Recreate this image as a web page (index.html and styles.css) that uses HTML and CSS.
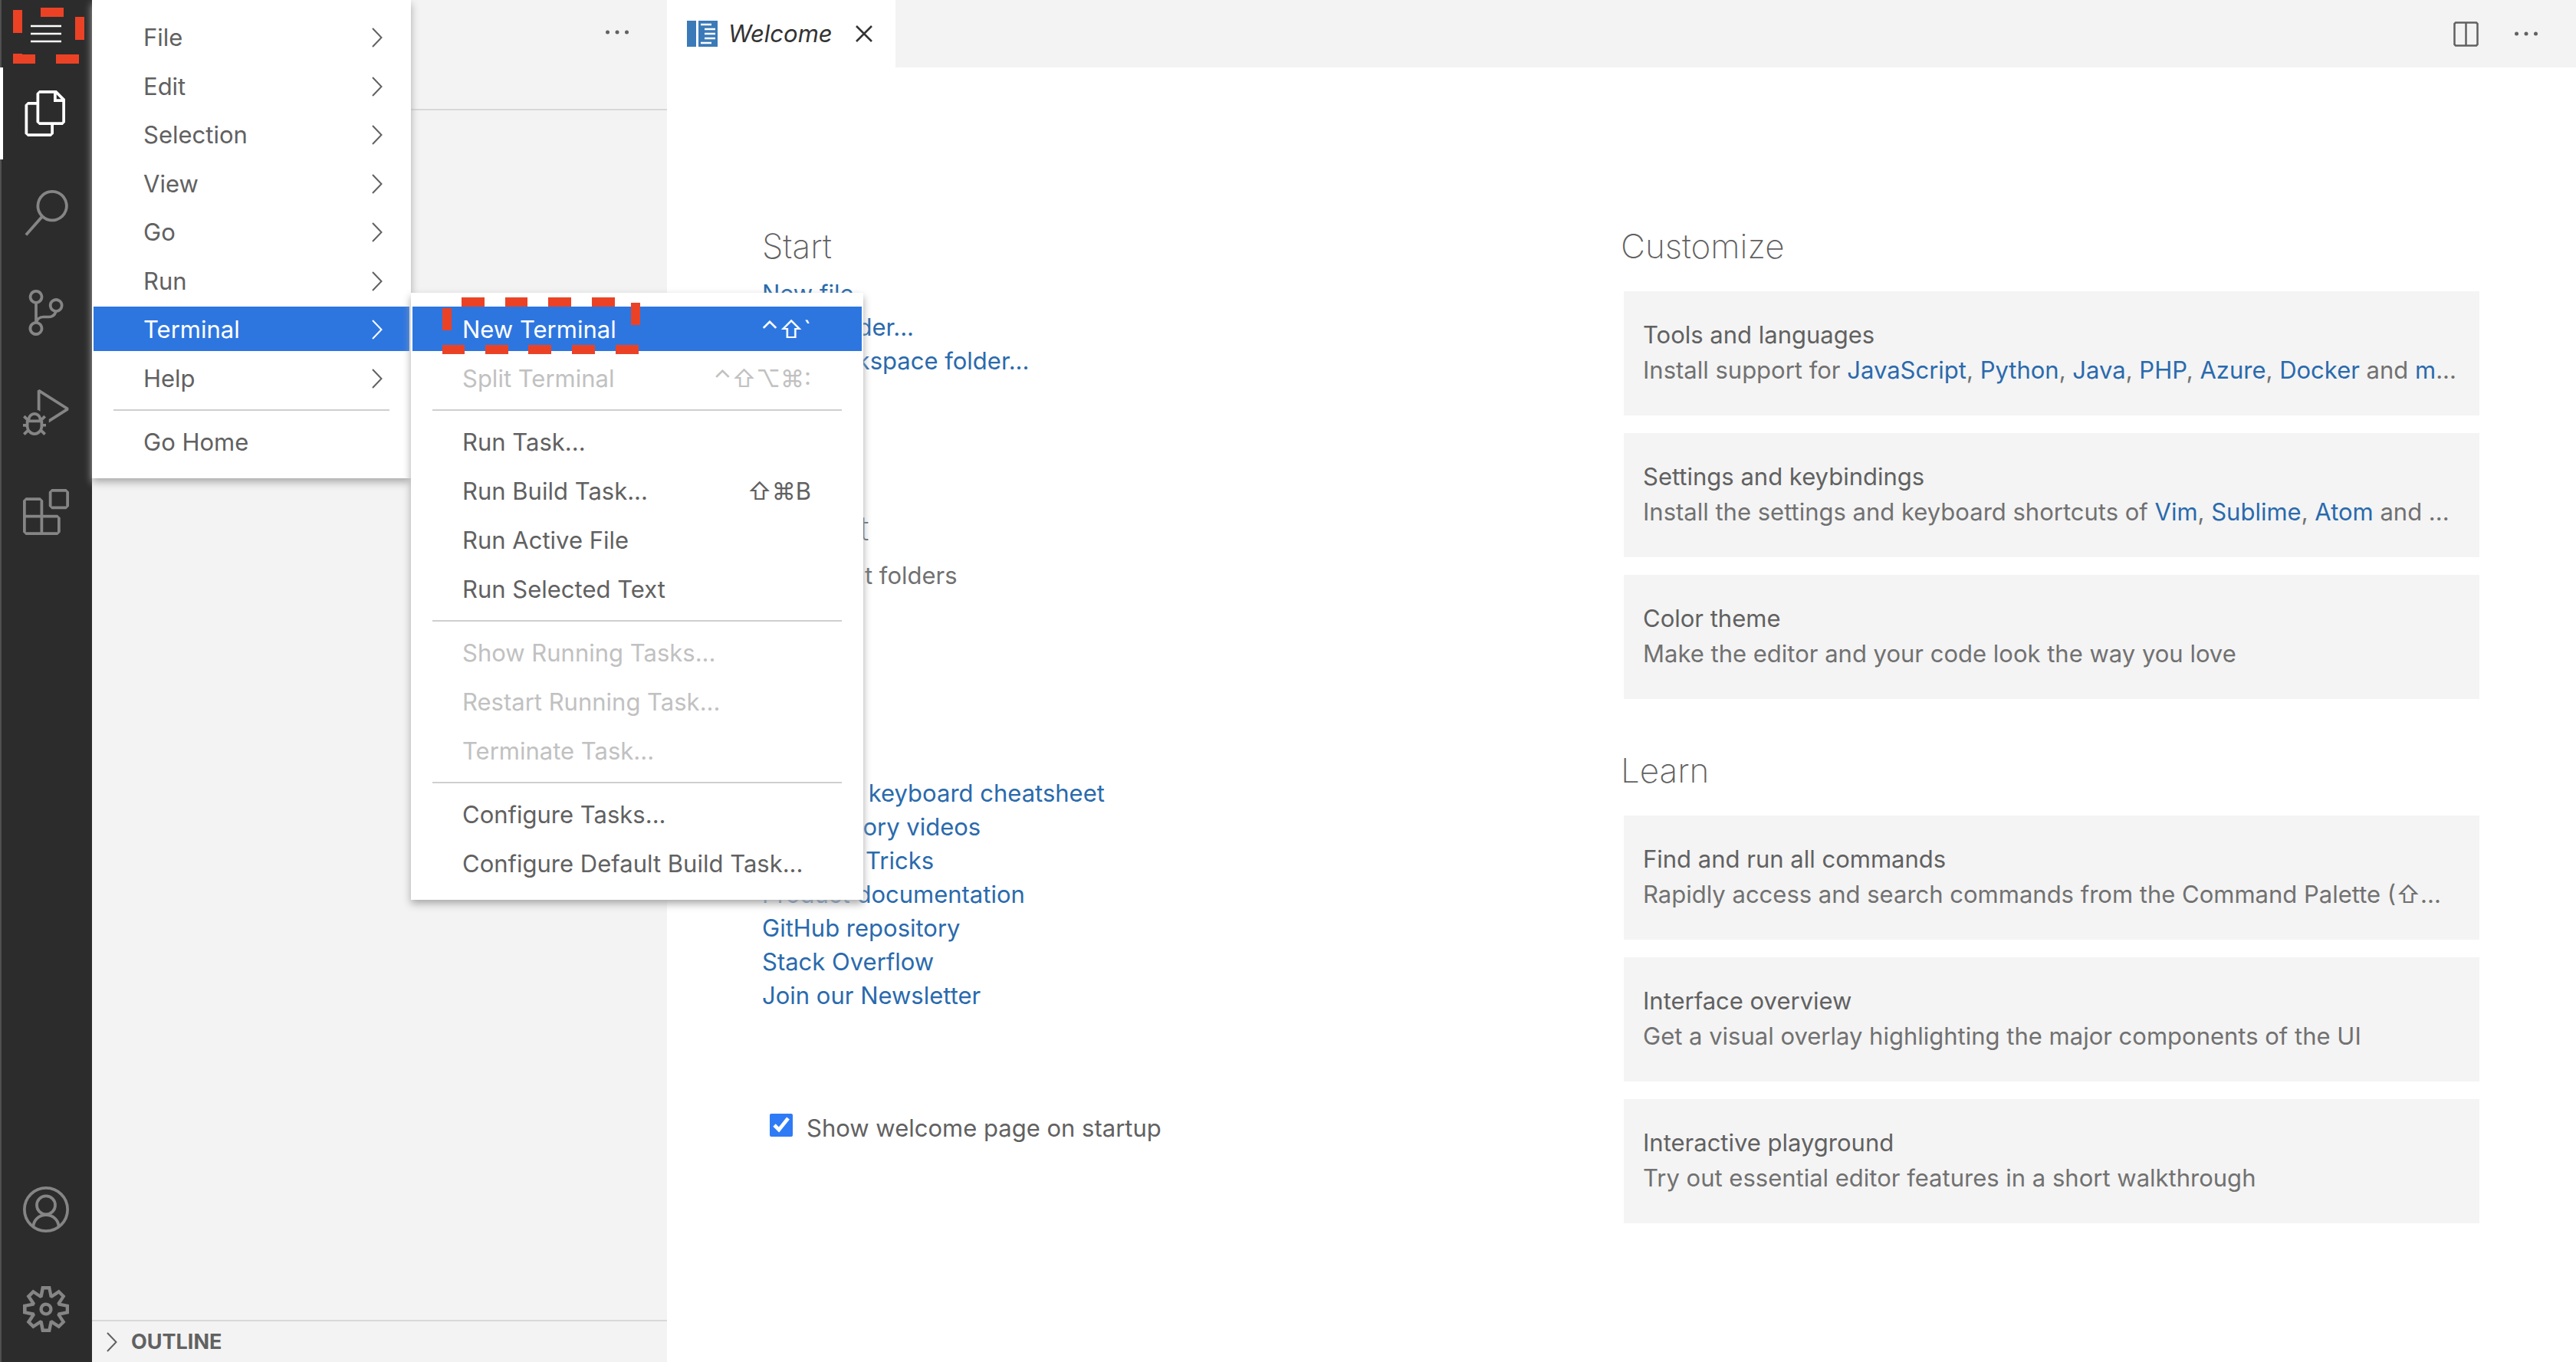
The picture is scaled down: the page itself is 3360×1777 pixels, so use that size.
FILE: index.html
```html
<!DOCTYPE html>
<html lang="en">
<head>
<meta charset="utf-8">
<title>Welcome</title>
<link rel="stylesheet" href="styles.css">
</head>
<body>
<svg class="sprite" aria-hidden="true">
  <symbol id="chevron" viewBox="0 0 14 26"><path d="M1 1l11.500 12L1 25" fill="none" stroke="currentColor" stroke-width="2"/></symbol>
  <symbol id="dots" viewBox="0 0 30 6"><circle cx="2.500" cy="3" r="2.500"/><circle cx="15" cy="3" r="2.500"/><circle cx="27.500" cy="3" r="2.500"/></symbol>
</svg>
<div class="workbench">
  <nav class="activity-bar" aria-label="Activity bar">
    <button class="menu-toggle" aria-label="Application menu"><svg width="40" height="24" viewBox="0 0 40 24"><path d="M0 2h40M0 12h40M0 22h40" stroke="currentColor" stroke-width="2.500"/></svg></button>
    <div class="activity-group">
      <button class="activity active" aria-label="Explorer"><svg viewBox="0 0 24 24"><path d="M17.500 0h-9L7 1.500V6H2.500L1 7.500v15.070L2.500 24h12.070L16 22.570V18h4.700l1.300-1.430V4.500L17.500 0zm0 2.120l2.380 2.380H17.500V2.120zm-3 20.380h-12v-15H7v9.070L8.500 18h6v4.500zm6-6h-12v-15H16V6h4.500v10.500z"/></svg></button>
      <button class="activity" aria-label="Search"><svg viewBox="0 0 24 24"><path d="M15.250 0a8.250 8.250 0 0 0-6.180 13.720L1 22.880l1.120 1 8.050-9.120A8.251 8.251 0 1 0 15.250.01V0zm0 15a6.750 6.750 0 1 1 0-13.500 6.750 6.750 0 0 1 0 13.500z"/></svg></button>
      <button class="activity" aria-label="Source control"><svg viewBox="0 0 24 24"><path d="M21.007 8.222A3.738 3.738 0 0 0 15.045 5.200a3.737 3.737 0 0 0 1.156 6.583 2.988 2.988 0 0 1-2.668 1.670h-2.990a4.456 4.456 0 0 0-2.989 1.165V7.400a3.737 3.737 0 1 0-1.494 0v9.117a3.776 3.776 0 1 0 1.816.099 2.990 2.990 0 0 1 2.668-1.667h2.990a4.484 4.484 0 0 0 4.223-3.039 3.736 3.736 0 0 0 3.250-3.687zM4.565 3.738a2.242 2.242 0 1 1 4.484 0 2.242 2.242 0 0 1-4.484 0zm4.484 16.441a2.242 2.242 0 1 1-4.484 0 2.242 2.242 0 0 1 4.484 0zm8.221-9.715a2.242 2.242 0 1 1 0-4.485 2.242 2.242 0 0 1 0 4.485z"/></svg></button>
      <button class="activity" aria-label="Run and debug"><svg viewBox="0 0 24 24"><path d="M10.940 13.500l-1.320 1.320a3.730 3.730 0 0 0-7.240 0L1.060 13.500 0 14.560l1.720 1.720-.22.22V18H0v1.500h1.500v.08c.077.489.214.966.41 1.420L0 22.940 1.060 24l1.650-1.650A4.308 4.308 0 0 0 6 24a4.310 4.310 0 0 0 3.290-1.650L10.940 24 12 22.940 10.090 21c.198-.464.336-.951.41-1.450v-.1H12V18h-1.500v-1.500l-.22-.22L12 14.560l-1.060-1.060zM6 13.500a2.250 2.250 0 0 1 2.250 2.250h-4.500A2.250 2.250 0 0 1 6 13.500zm3 6a3.330 3.330 0 0 1-3 3 3.330 3.330 0 0 1-3-3v-2.250h6v2.250zm14.760-9.900v1.260L13.500 17.370V15.600l8.500-5.370L9 2v9.460a5.070 5.070 0 0 0-1.500-.72V.63L8.640 0l15.120 9.600z"/></svg></button>
      <button class="activity" aria-label="Extensions"><svg viewBox="0 0 24 24"><path d="M13.500 1.500L15 0h7.500L24 1.500V9l-1.500 1.500H15L13.500 9V1.500zm1.500 0V9h7.500V1.500H15zM0 15V6l1.500-1.500H9L10.500 6v7.500H18l1.500 1.500v7.500L18 24H1.500L0 22.500V15zm9-1.500V6H1.500v7.500H9zM9 15H1.500v7.500H9V15zm1.500 7.500H18V15h-7.500v7.500z"/></svg></button>
    </div>
    <div class="activity-group">
      <button class="activity" aria-label="Accounts"><svg viewBox="0 0 24 24"><g fill="none" stroke="currentColor" stroke-width="1.500"><circle cx="12" cy="12" r="11.250"/><circle cx="12" cy="9.750" r="4.800"/><path d="M5.400 21a6.600 6.200 0 0 1 13.200 0"/></g></svg></button>
      <button class="activity" aria-label="Manage"><svg viewBox="0 0 24 24"><path d="M19.850 8.750l4.150.83v4.840l-4.150.83 2.350 3.520-3.430 3.430-3.520-2.350-.83 4.150H9.580l-.83-4.150-3.520 2.350-3.430-3.430 2.350-3.520L0 14.420V9.580l4.150-.83L1.800 5.230 5.230 1.800l3.520 2.350L9.580 0h4.840l.83 4.150 3.520-2.350 3.430 3.430-2.350 3.520zm-1.570 5.070l4-.81v-2l-4-.81-.54-1.300 2.290-3.430-1.430-1.430-3.430 2.290-1.300-.54-.81-4h-2l-.81 4-1.300.54-3.430-2.290-1.430 1.430L6.380 8.900l-.54 1.300-4 .81v2l4 .81.54 1.300-2.290 3.430 1.430 1.430 3.430-2.290 1.300.54.81 4h2l.81-4 1.300-.54 3.430 2.290 1.430-1.430-2.290-3.430.54-1.300zm-8.186-4.672A3.430 3.430 0 0 1 12 8.570 3.440 3.440 0 0 1 15.430 12a3.430 3.430 0 1 1-5.336-2.852zm.956 4.274c.281.188.612.288.95.288A1.700 1.700 0 0 0 13.710 12a1.710 1.710 0 1 0-2.660 1.422z"/></svg></button>
    </div>
  </nav>

  <aside class="sidebar">
    <header class="sidebar-title"><button class="icon-button" aria-label="Views and more actions"><svg width="30" height="6"><use href="#dots"/></svg></button></header>
    <div class="sidebar-body"></div>
    <button class="outline"><svg width="14" height="26"><use href="#chevron"/></svg>OUTLINE</button>
  </aside>

  <main class="editor">
    <header class="tabs">
      <div class="tab">
        <svg width="40" height="34" viewBox="0 0 40 34"><path fill="#3a7ab8" d="M0 0h12v34H0zM15 0h25v34H15z"/><path stroke="#fff" stroke-width="2.500" d="M18 5h14M23 11h14M23 17h14M23 23h14M18 29h14"/></svg>
        <span class="tab-label">Welcome</span>
        <button class="icon-button" aria-label="Close"><svg width="22" height="22" viewBox="0 0 22 22"><path d="M1 1l20 20M21 1L1 21" stroke="currentColor" stroke-width="2.500"/></svg></button>
      </div>
      <div class="editor-actions">
        <button class="icon-button" aria-label="Split editor"><svg width="33" height="33" viewBox="0 0 33 33"><path fill="none" stroke="currentColor" stroke-width="2.500" d="M3 1.500h27l1.500 1.500v27L30 31.500H3L1.500 30V3zM16.500 2v29"/></svg></button>
        <button class="icon-button" aria-label="More actions"><svg width="30" height="6"><use href="#dots"/></svg></button>
      </div>
    </header>

    <div class="welcome">
      <div class="column">
        <section class="links">
          <h2>Start</h2>
          <ul>
            <li><a href="#">New file</a></li>
            <li><a href="#">Open folder...</a></li>
            <li><a href="#">Add workspace folder...</a></li>
          </ul>
        </section>
        <section class="links">
          <h2>Recent</h2>
          <p>No recent folders</p>
        </section>
        <section class="links">
          <h2>Help</h2>
          <ul>
            <li><a href="#">Printable keyboard cheatsheet</a></li>
            <li><a href="#">Introductory videos</a></li>
            <li><a href="#">Tips and Tricks</a></li>
            <li><a href="#">Product documentation</a></li>
            <li><a href="#">GitHub repository</a></li>
            <li><a href="#">Stack Overflow</a></li>
            <li><a href="#">Join our Newsletter</a></li>
          </ul>
        </section>
        <div class="startup">
          <input type="checkbox" id="show-welcome" checked>
          <label for="show-welcome">Show welcome page on startup</label>
        </div>
      </div>
      <div class="column">
        <section class="cards">
          <h2>Customize</h2>
          <article class="card">
            <h3>Tools and languages</h3>
            <p>Install support for <a href="#">JavaScript</a>, <a href="#">Python</a>, <a href="#">Java</a>, <a href="#">PHP</a>, <a href="#">Azure</a>, <a href="#">Docker</a> and <a href="#">m</a>...</p>
          </article>
          <article class="card">
            <h3>Settings and keybindings</h3>
            <p>Install the settings and keyboard shortcuts of <a href="#">Vim</a>, <a href="#">Sublime</a>, <a href="#">Atom</a> and ...</p>
          </article>
          <article class="card">
            <h3>Color theme</h3>
            <p>Make the editor and your code look the way you love</p>
          </article>
        </section>
        <section class="cards">
          <h2>Learn</h2>
          <article class="card">
            <h3>Find and run all commands</h3>
            <p>Rapidly access and search commands from the Command Palette (⇧...</p>
          </article>
          <article class="card">
            <h3>Interface overview</h3>
            <p>Get a visual overlay highlighting the major components of the UI</p>
          </article>
          <article class="card">
            <h3>Interactive playground</h3>
            <p>Try out essential editor features in a short walkthrough</p>
          </article>
        </section>
      </div>
    </div>
  </main>

  <div class="menu app-menu">
    <ul class="menu-main">
      <li><button>File<svg width="14" height="26"><use href="#chevron"/></svg></button></li>
      <li><button>Edit<svg width="14" height="26"><use href="#chevron"/></svg></button></li>
      <li><button>Selection<svg width="14" height="26"><use href="#chevron"/></svg></button></li>
      <li><button>View<svg width="14" height="26"><use href="#chevron"/></svg></button></li>
      <li><button>Go<svg width="14" height="26"><use href="#chevron"/></svg></button></li>
      <li><button>Run<svg width="14" height="26"><use href="#chevron"/></svg></button></li>
      <li class="has-open">
        <button class="selected">Terminal<svg width="14" height="26"><use href="#chevron"/></svg></button>
        <div class="menu submenu">
          <ul>
            <li><button class="selected">New Terminal<kbd>⌃⇧`</kbd></button></li>
            <li><button disabled>Split Terminal<kbd>⌃⇧⌥⌘:</kbd></button></li>
          </ul>
          <hr>
          <ul>
            <li><button>Run Task...</button></li>
            <li><button>Run Build Task...<kbd>⇧⌘B</kbd></button></li>
            <li><button>Run Active File</button></li>
            <li><button>Run Selected Text</button></li>
          </ul>
          <hr>
          <ul>
            <li><button disabled>Show Running Tasks...</button></li>
            <li><button disabled>Restart Running Task...</button></li>
            <li><button disabled>Terminate Task...</button></li>
          </ul>
          <hr>
          <ul>
            <li><button>Configure Tasks...</button></li>
            <li><button>Configure Default Build Task...</button></li>
          </ul>
          <svg class="mark mark-terminal" width="258" height="74" viewBox="0 0 258 74"><path d="M25 0h30v12H25zM82 0h29v12H82zM138 0h30v12h-30zM195 0h30v12h-30zM246 7h12v29h-12zM0 14h12v29H0zM0 62h29v12H0zM56 62h30v12H56zM112 62h30v12h-30zM169 62h30v12h-30zM226 62h30v12h-30z"/></svg>
        </div>
      </li>
      <li><button>Help<svg width="14" height="26"><use href="#chevron"/></svg></button></li>
    </ul>
    <hr>
    <ul>
      <li><button>Go Home</button></li>
    </ul>
  </div>
  <svg class="mark mark-toggle" width="93" height="73" viewBox="0 0 93 73"><path d="M0 3h12v30H0zM36 0h30v12H36zM81 12h12v30H81zM0 60h12v1h17v12H0zM56 61h30v12H56z"/></svg>
</div>
</body>
</html>
```

FILE: styles.css
```css
* { box-sizing: border-box; }

body {
  margin: 0;
  font: 400 31px/44px Inter, "Liberation Sans", sans-serif;
  color: #616161;
  background: #fff;
}

h2, h3, p, ul { margin: 0; padding: 0; font-weight: 400; }
ul { list-style: none; }
a { color: #2a6aad; text-decoration: none; }
svg { display: block; flex: none; fill: currentColor; }

button {
  border: 0;
  padding: 0;
  background: none;
  font: inherit;
  color: inherit;
}

.sprite { position: absolute; width: 0; height: 0; }

.workbench {
  position: relative;
  display: flex;
  height: 100vh;
  overflow: hidden;
}

/* Activity bar */
.activity-bar {
  display: flex;
  flex-direction: column;
  flex: none;
  width: 120px;
  padding-bottom: 9px;
  background: #2c2c2c;
  box-shadow: inset 2px 0 #505050;
  color: #858585;
}
.menu-toggle {
  display: flex;
  align-items: center;
  justify-content: center;
  height: 88px;
  color: #fff;
}
.activity-group { display: flex; flex-direction: column; gap: 10px; }
.activity-group + .activity-group { margin-top: auto; }
.activity {
  display: flex;
  align-items: center;
  justify-content: center;
  height: 120px;
}
.activity svg { width: 60px; height: 60px; }
.activity.active { color: #fff; box-shadow: inset 4px 0 #fff; }

/* Side bar */
.sidebar {
  display: flex;
  flex-direction: column;
  flex: none;
  width: 750px;
  background: #f3f3f3;
}
.sidebar-title {
  display: flex;
  justify-content: flex-end;
  height: 84px;
  padding-right: 50px;
}
.sidebar-body { flex: 1; margin-top: 58px; border-top: 2px solid #d8d8d8; }
.outline {
  display: flex;
  align-items: center;
  gap: 18px;
  height: 55px;
  padding-left: 19px;
  border-top: 2px solid #d8d8d8;
  font-size: 27px;
  font-weight: 700;
}
.icon-button { display: flex; align-items: center; }

/* Editor */
.editor { flex: 1; min-width: 0; }
.tabs {
  display: flex;
  justify-content: space-between;
  height: 88px;
  background: #f3f3f3;
}
.tab {
  display: flex;
  align-items: center;
  padding: 0 30px 0 26px;
  background: #fff;
  color: #333;
}
.tab-label { margin: 0 30px 0 14px; font-style: italic; }
.editor-actions {
  display: flex;
  gap: 47px;
  padding-right: 50px;
}

.welcome {
  display: grid;
  grid-template-columns: 1fr 1fr;
  padding: 203px 126px 0 124px;
}
h2 { font-size: 44px; font-weight: 200; line-height: 60px; }

.links { margin-bottom: 166px; }
.links h2 { margin-bottom: 10px; }
.links p { padding-bottom: 4px; color: #717171; }
.startup {
  display: flex;
  align-items: center;
  gap: 18px;
  margin-top: -37px;
  padding-left: 10px;
}
.startup input { width: 30px; height: 30px; margin: 0 0 8px; accent-color: #2f7bf6; }

.cards { margin-bottom: 63px; }
.cards h2 { margin-bottom: 29px; }
.card {
  margin: 0 0 23px 4px;
  padding: 34px 25px 36px;
  background: #f4f4f4;
  line-height: 46px;
}
.card h3 { font-size: 31px; }
.card p { color: #717171; white-space: nowrap; }

/* Menus */
.menu {
  position: absolute;
  background: #fff;
  box-shadow: 0 5px 10px #a8a8a8;
}
.app-menu { left: 120px; top: 0; width: 416px; padding: 19px 2px; }
.submenu { left: 414px; top: -18px; width: 590px; padding: 18px 2px 19px; }
.menu ul { display: flex; flex-direction: column; gap: 6px; }
.menu .menu-main { height: 503px; gap: 0; justify-content: space-between; }
.menu button {
  display: flex;
  align-items: center;
  justify-content: space-between;
  width: 100%;
  height: 58px;
  padding: 2px 35px 0 65px;
}
.submenu button { padding-right: 66px; }
.menu .selected { background: #2d76e0; color: #fff; }
.menu button:disabled { color: #c1c1c1; }
.menu hr {
  height: 2px;
  margin: 12px 26px 11px;
  border: 0;
  background: #cfcfcf;
}
.menu kbd { font: inherit; }
.has-open { position: relative; }

/* Dashed callouts */
.mark { position: absolute; color: #eb4226; }
.mark-toggle { left: 17px; top: 10px; }
.mark-terminal { left: 41px; top: 6px; }
```
